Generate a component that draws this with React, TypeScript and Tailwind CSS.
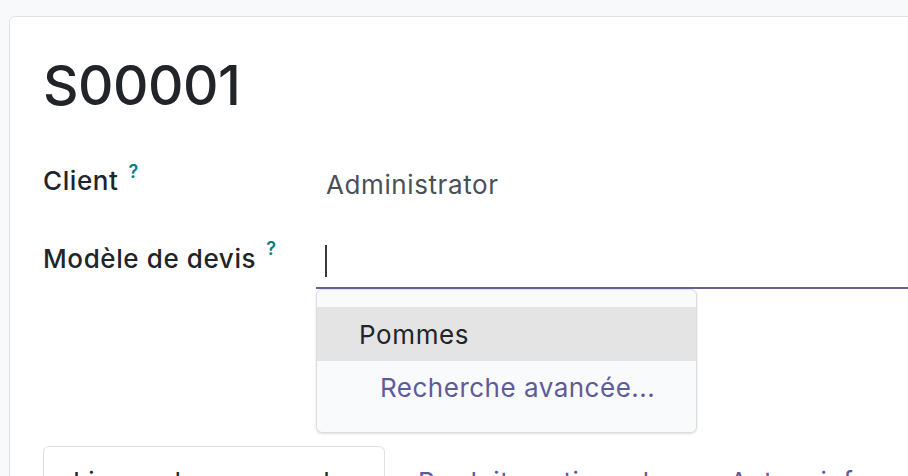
import React from "react";

const font = { fontFamily: "Inter, 'Noto Sans', 'Liberation Sans', sans-serif" };

function Help({ top }: { top: string }) {
  return (
    <span className={`ml-[10px] text-[18px] leading-none font-semibold text-[#017e84] ${top}`}>?</span>
  );
}

export default function App() {
  return (
    <div
      className="w-[908px] h-[476px] overflow-hidden bg-[#f8f9fa] pt-[16px] pl-[9px]"
      style={font}
    >
      <div className="w-[1000px] h-[600px] bg-white border border-[#dee2e6] rounded-tl-[6px] pl-[33px] pt-[41px]">
        <h1 className="text-[55px] leading-none font-medium text-[#212529] tracking-[-0.5px]">S00001</h1>

        <div className="mt-[48px] flex">
          <div className="w-[273px] flex items-start">
            <span className="text-[26px] leading-[39px] font-medium text-[#212529] tracking-[0.6px]">Client</span>
            <Help top="mt-[2px]" />
          </div>
          <div className="pt-[4px] pl-[10px] text-[26px] leading-[39px] text-[#495057] tracking-[0.6px]">Administrator</div>
        </div>

        <div className="mt-[35px] flex">
          <div className="w-[273px] flex items-start">
            <span className="text-[26px] leading-[39px] font-medium text-[#212529] tracking-[0.6px]">Modèle de devis</span>
            <Help top="mt-[1px]" />
          </div>
          <div className="relative flex-1">
            <div className="pt-[6px] pb-[10px] pl-[9px] border-b-2 border-[#6c6197]">
              <div className="w-[2px] h-[32px] bg-[#3a3a3a]" />
            </div>
            <div className="absolute left-0 top-full w-[381px] h-[144px] bg-[#f9fafb] border border-[#dcdde0] rounded-[6px] pt-[17px] shadow-sm">
              <div className="h-[54px] bg-[#e4e4e4] pl-[42px] flex items-center text-[26px] text-[#212529] tracking-[0.6px]">Pommes</div>
              <div className="pl-[63px] pt-[7px] text-[26px] leading-[39px] text-[#5f5a9a] tracking-[0.5px]">Recherche avancée...</div>
            </div>
          </div>
        </div>

        <div className="mt-[157px] flex items-start">
          <div className="w-[342px] h-[60px] border border-[#dee2e6] border-b-0 rounded-t-[6px] pl-[29px] pt-[15px] text-[26px] leading-[39px] text-[#212529] whitespace-nowrap tracking-[0.5px]">
            Lignes de commande
          </div>
          <div className="pl-[33px] pr-[33px] pt-[16px] text-[26px] leading-[39px] text-[#5f5a9a] whitespace-nowrap tracking-[0.5px]">
            Produits optionnels
          </div>
          <div className="pl-[33px] pt-[16px] text-[26px] leading-[39px] text-[#5f5a9a] whitespace-nowrap tracking-[0.5px]">
            Autres informations
          </div>
        </div>
      </div>
    </div>
  );
}
